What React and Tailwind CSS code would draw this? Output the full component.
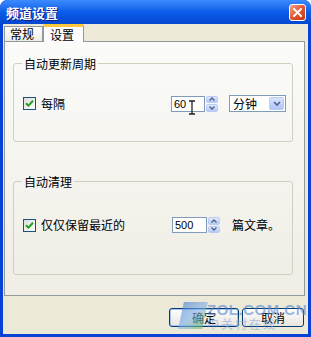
import React from 'react';

const font = { fontFamily: '"Noto Sans CJK SC", "Liberation Sans", sans-serif' };

function Check() {
  return (
    <span className="w-[13px] h-[13px] border border-[#1c5180] bg-gradient-to-br from-[#dcdcd7] to-[#ffffff] flex items-center justify-center shrink-0">
      <svg width="9" height="9" viewBox="0 0 9 9">
        <path d="M1 4.2 L3.4 6.6 L8 1.8" fill="none" stroke="#21a121" strokeWidth="2" />
      </svg>
    </span>
  );
}

function Spin({ value, w }) {
  return (
    <div className="flex items-center">
      <div className={`${w} h-[16px] border border-[#7f9db9] bg-white text-[11px] leading-[14px] pl-[2px] text-black`} style={{ fontFamily: '"Liberation Sans", sans-serif' }}>
        {value}
      </div>
      <div className="ml-[1px] w-[12px] h-[16px] flex flex-col gap-[1px]">
        <div className="flex-1 rounded-[2px] bg-gradient-to-b from-[#e1eafe] to-[#b4c8f6] border border-[#b9ccf5] flex items-center justify-center">
          <svg width="6" height="4" viewBox="0 0 6 4"><path d="M0.5 3.5 L3 1 L5.5 3.5" fill="none" stroke="#4d6185" strokeWidth="1.4" /></svg>
        </div>
        <div className="flex-1 rounded-[2px] bg-gradient-to-b from-[#e1eafe] to-[#b4c8f6] border border-[#b9ccf5] flex items-center justify-center">
          <svg width="6" height="4" viewBox="0 0 6 4"><path d="M0.5 0.5 L3 3 L5.5 0.5" fill="none" stroke="#4d6185" strokeWidth="1.4" /></svg>
        </div>
      </div>
    </div>
  );
}

export default function App() {
  return (
    <div className="w-[311px] h-[337px] bg-[#0842d6] rounded-t-[7px] flex flex-col text-[12px] text-black overflow-hidden relative" style={font}>
      {/* title bar */}
      <div className="h-[24px] shrink-0 flex items-center justify-between pl-[6px] pr-[5px] bg-gradient-to-b from-[#3d8bff] via-[#0a5de8] to-[#0647d0] rounded-t-[7px]">
        <span className="text-white font-bold text-[13px] leading-none [text-shadow:1px_1px_0_#0a1e8a]">频道设置</span>
        <div className="w-[17px] h-[17px] rounded-[3px] border border-white bg-gradient-to-br from-[#f0a58a] via-[#e2562f] to-[#c13a16] flex items-center justify-center">
          <svg width="9" height="9" viewBox="0 0 9 9">
            <path d="M1 1 L8 8 M8 1 L1 8" stroke="white" strokeWidth="2" strokeLinecap="round" />
          </svg>
        </div>
      </div>

      {/* body */}
      <div className="flex-1 mx-[3px] mb-[3px] bg-[#ece9d8] flex flex-col">
        {/* tabs */}
        <div className="flex items-end pl-[1px] h-[17px]">
          <div className="w-[39px] h-[15px] border border-b-0 border-[#919b9c] bg-gradient-to-b from-white to-[#ecebe6] flex items-center pl-[5px] leading-none">常规</div>
          <div className="w-[41px] h-[18px] -mb-[1px] relative z-10 border-x border-[#919b9c] border-t-[3px] border-t-[#ffc83c] rounded-t-[2px] bg-[#fcfcfe] flex items-center pl-[6px] leading-none">设置</div>
        </div>

        {/* panel */}
        <div className="ml-[1px] mr-[3px] h-[255px] border border-[#919b9c] bg-gradient-to-b from-[#fbfbf9] to-[#efede4] pl-[8px] pr-[11px] pt-[15px]">
          <fieldset className="h-[85px] border border-[#d0d0bf] rounded-[3px] px-0">
            <legend className="ml-[8px] px-[2px] leading-[13px]">自动更新周期</legend>
            <div className="flex items-center pl-[9px] pt-[25px]">
              <Check />
              <span className="ml-[5px] w-[130px] leading-none">每隔</span>
              <Spin value="60" w="w-[34px]" />
              <div className="ml-[11px] w-[57px] h-[17px] border border-[#7f9db9] bg-white flex items-center justify-between pl-[3px] pr-[1px]">
                <span className="leading-none">分钟</span>
                <div className="w-[15px] h-[13px] rounded-[2px] bg-gradient-to-b from-[#dce6fd] to-[#aec4f6] border border-[#b9ccf5] flex items-center justify-center">
                  <svg width="8" height="5" viewBox="0 0 8 5"><path d="M1 1 L4 4 L7 1" fill="none" stroke="#4d6185" strokeWidth="1.6" /></svg>
                </div>
              </div>
            </div>
          </fieldset>

          <fieldset className="mt-[33px] h-[100px] border border-[#d0d0bf] rounded-[3px] px-0">
            <legend className="ml-[8px] px-[2px] leading-[13px]">自动清理</legend>
            <div className="flex items-center pl-[9px] pt-[29px]">
              <Check />
              <span className="ml-[5px] w-[131px] leading-none">仅仅保留最近的</span>
              <Spin value="500" w="w-[35px]" />
              <span className="ml-[12px] leading-none">篇文章。</span>
            </div>
          </fieldset>
        </div>

        {/* buttons */}
        <div className="flex justify-end gap-[3px] pr-[4px] pt-[12px]">
          <button className="w-[70px] h-[19px] rounded-[3px] border border-[#003c74] bg-gradient-to-b from-white to-[#e6e5de] shadow-[inset_0_0_0_1px_#a8c4ef] leading-none">确定</button>
          <button className="w-[62px] h-[19px] rounded-[3px] border border-[#003c74] bg-gradient-to-b from-white to-[#e6e5de] leading-none">取消</button>
        </div>
      </div>

      {/* mouse I-beam cursor */}
      <svg className="absolute left-[188px] top-[100px]" width="8" height="15" viewBox="0 0 8 15">
        <path d="M1 1 H7 M4 1 V14 M1 14 H7" stroke="#222" strokeWidth="1.3" fill="none" />
      </svg>

      {/* watermark */}
      <div className="absolute left-[181px] top-[302px] flex items-start gap-[2px] opacity-60 pointer-events-none">
        <div className="w-[24px] h-[27px] bg-gradient-to-br from-[#4a7fd0] via-[#7fb0e8] to-[#6fbf5a] -skew-x-12"></div>
        <div className="flex flex-col leading-none">
          <span className="text-[15px] font-bold text-[#5a86d0] tracking-[0.5px]" style={{ fontFamily: '"Liberation Sans", sans-serif' }}>ZOL.COM.CN</span>
          <span className="text-[12px] text-[#8aa6d8] tracking-[2px] mt-[1px]">中关村在线</span>
        </div>
      </div>
    </div>
  );
}
